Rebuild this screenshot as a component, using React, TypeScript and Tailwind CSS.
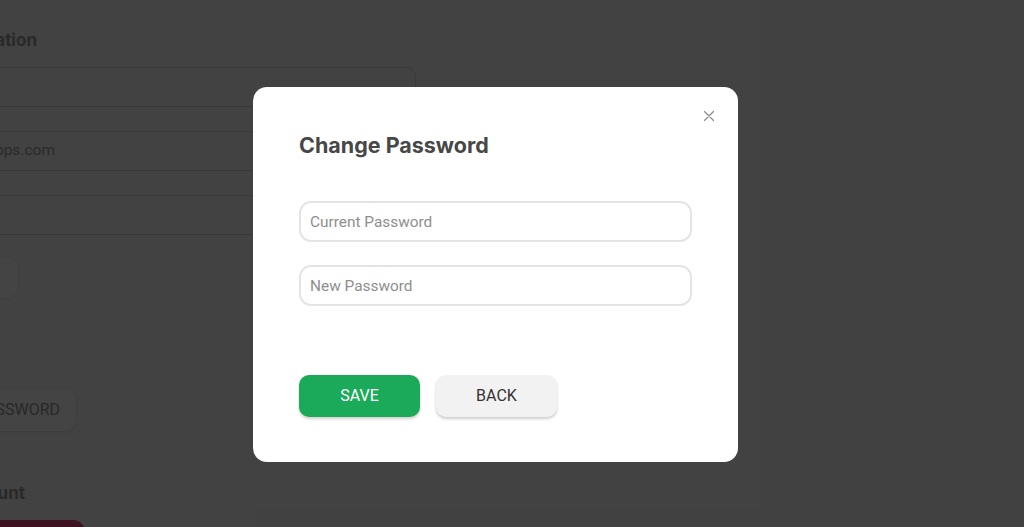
import React from "react";

function BgInput({ text, textRight }: { text?: string; textRight?: number }) {
  return (
    <div className="h-[40px] w-full rounded-[10px] border border-[#d4d4d4] bg-[#f5f5f5] flex items-center">
      {text ? (
        <span
          className="block text-right text-[15.5px] text-[#9e9e9e]"
          style={{ width: textRight }}
        >
          {text}
        </span>
      ) : null}
    </div>
  );
}

export default function App() {
  return (
    <div
      className="relative h-[527px] w-[1024px] overflow-hidden bg-[#f5f5f5]"
      style={{ fontFamily: "Roboto, 'Liberation Sans', sans-serif" }}
    >
      {/* Background page (dimmed) */}
      <div className="ml-[-200px] w-[616px] pt-[28px]">
        <div
          className="h-[24px] w-[237px] text-right text-[17px] font-bold leading-[24px] text-[#9a9a9a]"
          style={{ fontFamily: "Inter, Roboto, sans-serif" }}
        >
          Personal Information
        </div>
        <div className="mt-[15px] flex flex-col gap-[24px]">
          <BgInput />
          <BgInput text="support@myapps.com" textRight={254} />
          <BgInput />
        </div>
        <div className="mt-[23px] ml-[98px] h-[40px] w-[120px] rounded-[12px] bg-white shadow-[0_1px_3px_rgba(0,0,0,0.06)]" />
        <div className="mt-[91px] ml-[76px] flex h-[42px] w-[200px] items-center justify-end rounded-[12px] bg-white pr-[16px] text-[16px] text-[#969696] shadow-[0_1px_3px_rgba(0,0,0,0.08)]">
          CHANGE PASSWORD
        </div>
        <div
          className="mt-[50px] h-[24px] w-[225px] text-right text-[17px] font-bold leading-[24px] text-[#9a9a9a]"
          style={{ fontFamily: "Inter, Roboto, sans-serif" }}
        >
          Delete Account
        </div>
        <div className="mt-[15px] ml-[95px] h-[42px] w-[190px] rounded-[12px] bg-[#e5467c]" />
      </div>

      {/* Overlay */}
      <div className="absolute inset-0 bg-black/[0.735]" />

      {/* Modal */}
      <div className="absolute left-[253px] top-[87px] h-[375px] w-[485px] rounded-[14px] bg-white px-[46px] pt-[44px]">
        <button className="absolute right-[24px] top-[24px] h-[10px] w-[10px]" aria-label="close">
          <svg width="10" height="10" viewBox="0 0 10 10" className="block">
            <path d="M0.5 0.5 L9.5 9.5 M9.5 0.5 L0.5 9.5" stroke="#8e8e8e" strokeWidth="1.4" strokeLinecap="round" />
          </svg>
        </button>
        <div
          className="h-[28px] text-[21.5px] font-bold leading-[28px] text-[#474747]"
          style={{ fontFamily: "Inter, 'Open Sans', sans-serif" }}
        >
          Change Password
        </div>
        <div className="mt-[42px] flex h-[41px] w-[393px] items-center rounded-[12px] border-2 border-[#e4e4e4] px-[9px] pt-[2px] text-[15.4px] text-[#8e8e8e]">
          Current Password
        </div>
        <div className="mt-[23px] flex h-[41px] w-[393px] items-center rounded-[12px] border-2 border-[#e4e4e4] px-[9px] pt-[2px] text-[15.4px] text-[#8e8e8e]">
          New Password
        </div>
        <div className="mt-[69px] flex gap-[16px]">
          <button className="flex h-[42px] w-[121px] items-center justify-center rounded-[10px] bg-[#1aaa5a] text-[16px] text-white shadow-[0_2px_3px_rgba(0,0,0,0.18)]">
            SAVE
          </button>
          <button className="flex h-[42px] w-[121px] items-center justify-center rounded-[10px] bg-[#f2f2f2] text-[16px] text-[#333333] shadow-[0_2px_3px_rgba(0,0,0,0.2)]">
            BACK
          </button>
        </div>
      </div>
    </div>
  );
}
